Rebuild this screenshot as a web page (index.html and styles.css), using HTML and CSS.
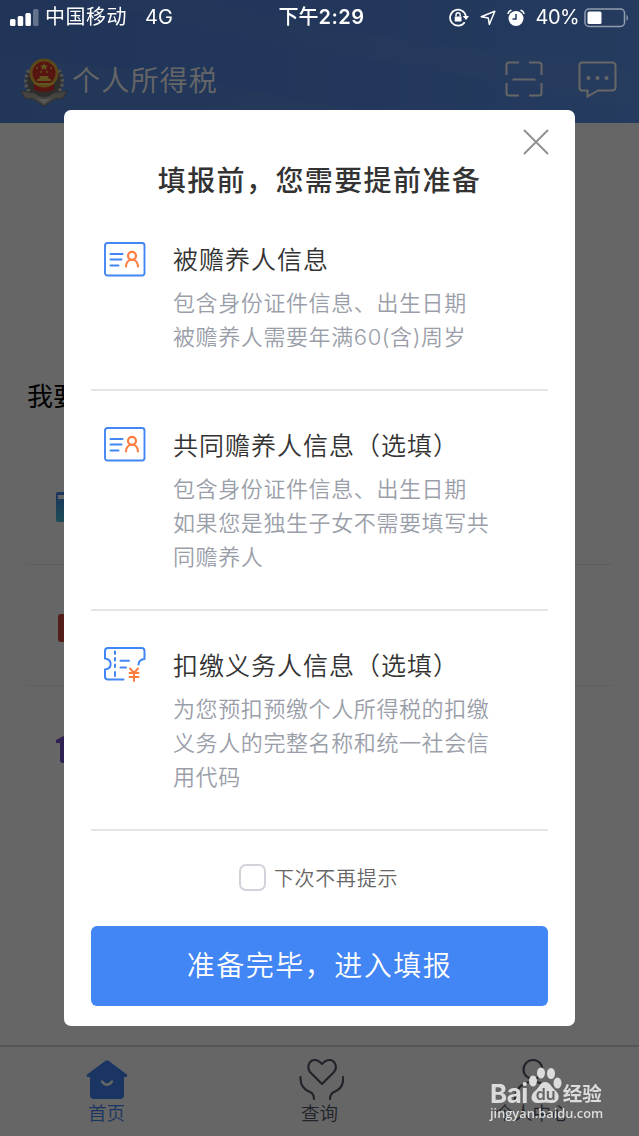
FILE: index.html
```html
<!DOCTYPE html>
<html lang="zh-CN">
<head>
    <meta charset="UTF-8">
    <meta name="viewport" content="width=device-width, initial-scale=1.0">
    <title>个人所得税</title>
    <link rel="stylesheet" href="styles.css">
</head>
<body>

    <div class="page">
        <div class="header">
            <svg class="header-waves" viewBox="0 0 639 123" preserveAspectRatio="none">
                <path d="M0 62C150 58 260 100 440 123H0Z" fill="#fff" opacity=".04"/>
                <path d="M90 0C260 50 420 60 639 110V70C480 50 300 30 210 0Z" fill="#fff" opacity=".03"/>
            </svg>
            <svg class="emblem" width="48" height="50" viewBox="0 0 48 50">
                <path d="M9 13Q1 27 12 38L24 45L36 38Q47 27 39 13" fill="#6d6b68" stroke="#c9c5bc" stroke-width="3.500" stroke-dasharray="3 2"/>
                <path d="M1 34L15 36Q24 44 33 36L47 34L43 41L35 42L24 49L13 42L5 41Z" fill="#aaa7a3" stroke="#77736d"/>
                <path d="M16 40Q24 45 32 40L24 47Z" fill="#ddd"/>
                <path d="M14 27H34V33Q24 37 14 33Z" fill="#dc2c20"/>
                <circle cx="24" cy="16" r="13" fill="#dc2c20" stroke="#e3b23c" stroke-width="3"/>
                <path d="M24 6L25.2 8.5L28 8.7L26 10.5L26.6 13L24 11.6L21.4 13L22 10.5L20 8.7L22.8 8.5Z" fill="#f5d34a"/>
                <g fill="#f5d34a">
                    <circle cx="17" cy="11" r="1"/><circle cx="31" cy="11" r="1"/>
                    <circle cx="21" cy="15" r="1"/><circle cx="27" cy="15" r="1"/>
                    <path d="M20 19H28L29 22H31V24H17V22H19Z"/>
                    <path d="M13 26H35L32 28H16Z"/>
                </g>
            </svg>
            <span class="app-name">个人所得税</span>
            <div class="header-actions">
                <svg width="38" height="36" viewBox="0 0 38 36">
                    <path d="M1.500 14V4Q1.500 1.500 4 1.500H14M24 1.500H34Q36.500 1.500 36.500 4V14M36.500 22V32Q36.500 34.500 34 34.500H24M14 34.500H4Q1.500 34.500 1.500 32V22M7.500 18.500H30.500" fill="none" stroke="#fff" stroke-width="2"/>
                </svg>
                <svg width="39" height="37" viewBox="0 0 39 37">
                    <path d="M4 1.500H34Q37.500 1.500 37.500 5V26Q37.500 29.500 34 29.500H20L9.500 35.500V29.500H4Q1.500 29.500 1.500 26V5Q1.500 1.500 4 1.500Z" fill="none" stroke="#fff" stroke-width="2"/>
                    <circle cx="10.500" cy="17" r="2" fill="#fff"/><circle cx="19.500" cy="17" r="2" fill="#fff"/><circle cx="28.500" cy="17" r="2" fill="#fff"/>
                </svg>
            </div>
        </div>

        <div class="content">
            <h2 class="section-title">我要</h2>
            <div class="card">
                <div class="card-row">
                    <svg width="30" height="30" viewBox="0 0 30 30">
                        <defs><linearGradient id="blue" x2="0" y2="1"><stop stop-color="#4a86e8"/><stop offset="1" stop-color="#43bfd6"/></linearGradient></defs>
                        <rect width="30" height="30" rx="2" fill="url(#blue)"/>
                        <rect x="2" y="3" width="26" height="4" fill="#fff"/>
                    </svg>
                </div>
                <div class="card-row">
                    <svg width="30" height="30" viewBox="0 0 30 30">
                        <rect x="2" y="1" width="26" height="28" rx="3" fill="#cf4a40"/>
                    </svg>
                </div>
                <div class="card-row">
                    <svg width="30" height="32" viewBox="0 0 30 32">
                        <path d="M15 0L30 9L28 11H26V28Q26 31 23 31H7Q4 31 4 28V11H0V8Z" fill="#7755cc"/>
                    </svg>
                </div>
            </div>
        </div>

        <div class="tabbar">
            <div class="tab active">
                <svg width="44" height="42" viewBox="0 1 44 42">
                    <path d="M20.500 2.800Q22 1.500 23.500 2.800L42 16.500Q43 18.500 41 19H39V37Q39 41 35 41H9Q5 41 5 37V19H3Q1 18.500 2 16.500Z" fill="#4285f4"/>
                    <path d="M17 23.500Q22 30 27 23.500" fill="none" stroke="#fff" stroke-width="2.500" stroke-linecap="round"/>
                </svg>
                <span>首页</span>
            </div>
            <div class="tab">
                <svg width="48" height="42" viewBox="0 1 48 42">
                    <path d="M26 26L14 14C10 8 14 2 19 2C22 2 24 4 26 6C28 4 30 2 33 2C39 2 42 9 38 14ZM4.500 19C4 28 9 32 14 34Q18 36 18 41M47 19C48 28 43 32 38 34Q34 36 34 41" fill="none" stroke="#555b6b" stroke-width="2.200" stroke-linecap="round" stroke-linejoin="round"/>
                </svg>
                <span>查询</span>
            </div>
            <div class="tab">
                <svg width="44" height="42" viewBox="0 1 44 42">
                    <circle cx="22" cy="11.500" r="9.500" fill="none" stroke="#555b6b" stroke-width="2.200"/>
                    <path d="M4 41C4 18 40 18 40 41" fill="none" stroke="#555b6b" stroke-width="2.200" stroke-linecap="round"/>
                </svg>
                <span>个人中心</span>
            </div>
        </div>
    </div>

    <div class="mask">
        <div class="dialog">
            <svg class="close" width="26" height="26" viewBox="0 0 26 26">
                <path d="M1.500 1.500L24.500 24.500M24.500 1.500L1.500 24.500" stroke="#929292" stroke-width="2" stroke-linecap="round"/>
            </svg>
            <h1 class="dialog-title">填报前，您需要提前准备</h1>

            <div class="item">
                <svg class="item-icon" width="42" height="35" viewBox="0 0 42 35">
                    <rect x="1" y="1" width="39.500" height="32.500" rx="2.500" fill="none" stroke="#4285f4" stroke-width="1.900"/>
                    <path d="M6.500 12H18.500M6.500 17.500H17.500M6.500 23.500H14.500" stroke="#4285f4" stroke-width="2" stroke-linecap="round"/>
                    <circle cx="28" cy="13.800" r="4" fill="none" stroke="#ff7d41" stroke-width="2.200"/>
                    <path d="M22 24.500C22 15.500 34 15.500 34 24.500" fill="none" stroke="#ff7d41" stroke-width="2.200" stroke-linecap="round"/>
                </svg>
                <div>
                    <h3>被赡养人信息</h3>
                    <p>包含身份证件信息、出生日期<br>被赡养人需要年满60(含)周岁</p>
                </div>
            </div>

            <div class="item">
                <svg class="item-icon" width="42" height="35" viewBox="0 0 42 35">
                    <rect x="1" y="1" width="39.500" height="32.500" rx="2.500" fill="none" stroke="#4285f4" stroke-width="1.900"/>
                    <path d="M6.500 12H18.500M6.500 17.500H17.500M6.500 23.500H14.500" stroke="#4285f4" stroke-width="2" stroke-linecap="round"/>
                    <circle cx="28" cy="13.800" r="4" fill="none" stroke="#ff7d41" stroke-width="2.200"/>
                    <path d="M22 24.500C22 15.500 34 15.500 34 24.500" fill="none" stroke="#ff7d41" stroke-width="2.200" stroke-linecap="round"/>
                </svg>
                <div>
                    <h3>共同赡养人信息（选填）</h3>
                    <p>包含身份证件信息、出生日期<br>如果您是独生子女不需要填写共<br>同赡养人</p>
                </div>
            </div>

            <div class="item">
                <svg class="item-icon" width="42" height="35" viewBox="0 0 42 35">
                    <path d="M19.500 32.500H4Q1 32.500 1 29.500V22.500C8.500 21.500 8.500 12.500 1 11.500V4Q1 1 4 1H37.500Q40.500 1 40.500 4V12Q35 12.500 34.500 17.500" fill="none" stroke="#4285f4" stroke-width="2" stroke-linecap="round" stroke-linejoin="round"/>
                    <path d="M11 4.500V7M11 11V13.500M11 17.500V20M11 25V29" stroke="#4285f4" stroke-width="2" stroke-linecap="round"/>
                    <path d="M16.500 13.800H25M16.500 20.500H22" stroke="#4285f4" stroke-width="2" stroke-linecap="round"/>
                    <path d="M26 21.500L30 26L34 21.500M30 26V34M25.500 26H34.500M25.500 30H34.500" fill="none" stroke="#ff7d41" stroke-width="2" stroke-linecap="round"/>
                </svg>
                <div>
                    <h3>扣缴义务人信息（选填）</h3>
                    <p>为您预扣预缴个人所得税的扣缴<br>义务人的完整名称和统一社会信<br>用代码</p>
                </div>
            </div>

            <label class="no-remind">
                <input type="checkbox">
                <span>下次不再提示</span>
            </label>
            <button class="submit">准备完毕，进入填报</button>
        </div>
    </div>

    <div class="statusbar">
        <div class="status-left">
            <svg width="29" height="18" viewBox="0 0 29 18" fill="#fff">
                <rect x="0" y="10" width="5.500" height="7" rx="1.500"/>
                <rect x="7.700" y="7" width="5.500" height="10" rx="1.500"/>
                <rect x="15.400" y="4" width="5.500" height="13" rx="1.500"/>
                <rect x="23" y="0" width="5.500" height="17" rx="1.500" opacity=".3"/>
            </svg>
            <span class="carrier">中国移动</span>
            <span>4G</span>
        </div>
        <span class="time">下午<b>2:29</b></span>
        <div class="status-right">
            <svg width="20" height="19" viewBox="0 0 20 19">
                <path d="M15.700 14.200A8 8 0 1 1 16.900 8" fill="none" stroke="#fff" stroke-width="1.700"/>
                <path d="M13.700 8H20L17 12Z" fill="#fff"/>
                <rect x="5.700" y="8.500" width="6.800" height="5" rx=".5" fill="#fff"/>
                <path d="M7 8.500V7Q7 4.800 9.100 4.800Q11.200 4.800 11.200 7V8.500" fill="none" stroke="#fff" stroke-width="1.400"/>
            </svg>
            <svg width="16" height="16" viewBox="0 0 16 16">
                <path d="M14.800 1.200L9.300 14.500L8.300 7.900L1.200 6.800Z" fill="none" stroke="#fff" stroke-width="1.500" stroke-linejoin="round"/>
            </svg>
            <svg width="18" height="18" viewBox="0 0 18 18">
                <circle cx="9" cy="9.500" r="7.500" fill="#fff"/>
                <path d="M1 5Q1.500 2 4.500 1.300M17 5Q16.500 2 13.500 1.300" fill="none" stroke="#fff" stroke-width="1.500"/>
                <path d="M9 5V10H5.500" fill="none" stroke="#21375d" stroke-width="1.500"/>
            </svg>
            <span class="percent">40%</span>
            <svg class="battery" width="46" height="20" viewBox="0 0 46 20">
                <rect x="1" y="1" width="39.500" height="17.500" rx="4" fill="none" stroke="#fff" stroke-opacity=".5" stroke-width="1.500"/>
                <rect x="3.500" y="3.500" width="14" height="12.500" rx="1.500" fill="#fff"/>
                <path d="M42.500 6.500Q45.500 9.800 42.500 13Z" fill="#fff" opacity=".5"/>
            </svg>
        </div>
    </div>

    <div class="watermark">
        <div class="wm-logo">
            <span class="wm-bai">Bai</span>
            <div class="wm-paw">
                <svg width="34" height="37" viewBox="0 0 34 37" fill="#dcdcdc">
                    <ellipse cx="5" cy="14" rx="4" ry="5.500"/>
                    <ellipse cx="13" cy="6" rx="4" ry="5.500"/>
                    <ellipse cx="23" cy="6.500" rx="4" ry="5.500"/>
                    <ellipse cx="29.500" cy="16" rx="4" ry="5.500"/>
                    <path d="M17 15C22 15 23 20 28 24C34 30 29 37 23 36Q17 35 11 36C3 37 1 29 7 24C12 20 12 15 17 15Z"/>
                </svg>
                <span>du</span>
            </div>
            <span class="wm-cn">经验</span>
        </div>
        <div class="wm-url">jingyan.baidu.com</div>
    </div>

</body>
</html>
```
FILE: styles.css
```css
* {
    box-sizing: border-box;
}
body {
    margin: 0;
    font-family: "Noto Sans CJK SC", sans-serif;
    font-weight: 350;
}
h1, h2, h3, p {
    margin: 0;
    font-weight: inherit;
}
svg {
    display: block;
    flex-shrink: 0;
}

/* home page */
.page {
    height: 1136px;
    display: flex;
    flex-direction: column;
    background: #fff;
    overflow: hidden;
}
.header {
    position: relative;
    height: 123px;
    padding: 35px 22px 0 20px;
    display: flex;
    align-items: center;
    background: linear-gradient(90deg, #5084dc, #5589e2 50%, #5c94ed);
    color: #fff;
}
.header-waves {
    position: absolute;
    top: 0;
    left: 0;
    width: 100%;
    height: 100%;
}
.emblem {
    margin-top: 5px;
}
.app-name {
    margin-left: 4px;
    font-size: 28px;
    letter-spacing: 1.2px;
}
.header-actions {
    margin-left: auto;
    display: flex;
    gap: 35px;
}
.content {
    flex: 1;
    padding: 253px 27px 0 27px;
}
.section-title {
    font-size: 26px;
    line-height: 38px;
    font-weight: 400;
}
.card {
    margin-top: 30px;
    border-radius: 4px;
    box-shadow: 0 0 10px rgba(0, 0, 0, 0.03);
}
.card-row {
    height: 121px;
    padding: 6px 0 0 29px;
    display: flex;
    align-items: center;
    border-bottom: 1px solid #eee;
}
.card-row:last-child {
    height: 119px;
    padding-top: 4px;
    border-bottom: none;
}
.tabbar {
    height: 91px;
    padding-top: 12px;
    display: flex;
    border-top: 2px solid #d8d8d8;
}
.tab {
    flex: 1;
    display: flex;
    flex-direction: column;
    align-items: center;
    font-size: 18.5px;
    line-height: 22px;
    color: #555b6b;
}
.tab.active {
    color: #4285f4;
}

/* dialog */
.mask {
    position: fixed;
    inset: 0;
    display: flex;
    align-items: center;
    justify-content: center;
    background: rgba(0, 0, 0, 0.6);
}
.dialog {
    position: relative;
    width: 511px;
    height: 916px;
    padding: 49px 27px 20px;
    display: flex;
    flex-direction: column;
    border-radius: 7px;
    background: #fff;
}
.close {
    position: absolute;
    top: 19px;
    right: 26px;
}
.dialog-title {
    font-size: 28px;
    line-height: 40px;
    font-weight: 500;
    letter-spacing: 1.4px;
    text-align: center;
    color: #333;
    margin-bottom: 5px;
}
.item {
    padding: 36px 0 35px 13px;
    display: flex;
    gap: 27px;
    border-bottom: 2px solid #e4e5e8;
}
.item + .item {
    padding-top: 35px;
}
.item-icon {
    margin-top: 2px;
}
.item + .item .item-icon {
    margin-top: 1px;
}
.item h3 {
    font-size: 25px;
    line-height: 36px;
    letter-spacing: 1px;
    color: #333;
}
.item p {
    margin-top: 10px;
    font-family: Inter, "Noto Sans CJK SC", sans-serif;
    font-size: 22px;
    line-height: 34px;
    letter-spacing: 0.6px;
    color: #9a9ea9;
    white-space: nowrap;
}
.no-remind {
    flex: 1;
    display: flex;
    align-items: center;
    justify-content: center;
    gap: 8px;
    padding: 0 2px 2px 0;
    font-size: 20px;
    letter-spacing: 0.7px;
    color: #666;
}
.no-remind span {
    margin-top: -1px;
}
.no-remind input {
    appearance: none;
    width: 27px;
    height: 27px;
    margin: 0;
    border: 2px solid #d2d3da;
    border-radius: 7px;
}
.submit {
    height: 80px;
    padding-bottom: 6px;
    border: none;
    border-radius: 6px;
    background: #4285f4;
    color: #fff;
    font-family: inherit;
    font-size: 28px;
    font-weight: inherit;
    letter-spacing: 1.5px;
}

/* status bar */
.statusbar {
    position: fixed;
    top: 0;
    left: 0;
    width: 100%;
    height: 35px;
    padding: 0 9px 0 10px;
    display: grid;
    grid-template-columns: 1fr auto 1fr;
    align-items: center;
    color: #fff;
    font-family: Inter, "Noto Sans CJK SC", sans-serif;
    font-size: 20px;
    line-height: 24px;
    font-weight: 400;
}
.status-left, .status-right {
    display: flex;
    align-items: center;
}
.status-left span, .time, .percent {
    margin-top: -1px;
}
.status-left .carrier {
    margin: -1px 18px 0 6px;
    letter-spacing: 0.5px;
}
.time {
    font-weight: 500;
    padding-left: 3px;
}
.time b {
    font-weight: 600;
    letter-spacing: 0.5px;
}
.status-right {
    justify-content: flex-end;
    gap: 11px;
}
.percent {
    letter-spacing: -0.6px;
}
.battery {
    margin-left: -6px;
}

/* watermark */
.watermark {
    position: fixed;
    left: 490px;
    top: 1067px;
    color: #dcdcdc;
    font-family: "Open Sans", sans-serif;
    font-weight: 600;
}
.wm-logo {
    display: flex;
    align-items: flex-end;
    height: 37px;
}
.wm-bai {
    font-family: Inter, sans-serif;
    font-size: 26px;
    line-height: 21px;
    font-weight: 700;
    letter-spacing: -0.5px;
}
.wm-paw {
    position: relative;
}
.wm-paw span {
    position: absolute;
    left: 8px;
    bottom: 1px;
    font-family: Inter, sans-serif;
    font-size: 16px;
    line-height: 18px;
    color: #666;
}
.wm-cn {
    margin-left: 1px;
    font-family: "Noto Sans CJK SC", sans-serif;
    font-size: 19.5px;
    line-height: 23px;
    font-weight: 700;
}
.wm-url {
    font-size: 12.8px;
    line-height: 19px;
}
```
